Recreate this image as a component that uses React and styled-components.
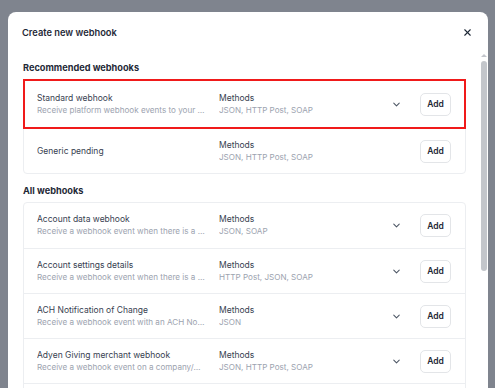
import React from "react";
import styled, { createGlobalStyle } from "styled-components";
import { ChevronDown, X } from "lucide-react";

const GlobalStyle = createGlobalStyle`
  * { box-sizing: border-box; }
  html, body { margin: 0; padding: 0; }
  body {
    font-family: Inter, "Noto Sans", sans-serif;
    background: #7f848e;
    overflow: hidden;
  }
`;

const Backdrop = styled.div`
  width: 495px;
  height: 388px;
  padding: 12px 7px 0 8px;
  overflow: hidden;
`;

const Modal = styled.div`
  width: 480px;
  height: 430px;
  background: #fff;
  border-radius: 8px;
  display: flex;
  flex-direction: column;
`;

const Header = styled.div`
  height: 40px;
  flex-shrink: 0;
  display: flex;
  align-items: center;
  justify-content: space-between;
  padding: 0 15px 0 14px;
`;

const Title = styled.h2`
  margin: 0;
  font-size: 9.3px;
  font-weight: 600;
  color: #1f2937;
`;

const CloseButton = styled.button`
  border: 0;
  background: none;
  padding: 0;
  display: flex;
  color: #1f2937;
  cursor: pointer;
`;

const Main = styled.div`
  flex: 1;
  min-height: 0;
  display: flex;
`;

const Content = styled.div`
  flex: 1;
  min-width: 0;
  overflow: hidden;
  padding: 10px 15px 16px 15px;
`;

const ScrollRail = styled.div`
  width: 6px;
  margin-right: 1px;
  padding-top: 2px;
  display: flex;
  flex-direction: column;
  align-items: center;
`;

const ScrollArrow = styled.span`
  width: 0;
  height: 0;
  margin-bottom: 4px;
  border-left: 3px solid transparent;
  border-right: 3px solid transparent;
  border-bottom: 3px solid #c3c6cb;
`;

const ScrollThumb = styled.div`
  width: 6px;
  height: 210px;
  border-radius: 3px;
  background: #c3c6cb;
`;

const SectionTitle = styled.h3`
  margin: 0 0 5px;
  font-size: 9.2px;
  font-weight: 700;
  color: #1f2937;
  line-height: 12px;
`;

const Card = styled.div`
  border: 1px solid #eceef1;
  border-radius: 4px;
  margin-bottom: 11px;
`;

const Row = styled.div`
  display: grid;
  grid-template-columns: 168px 1fr 20px 31px;
  column-gap: 14px;
  align-items: center;
  height: ${(p) => (p.$highlight ? "48px" : "45px")};
  padding: 0 14px 0 13px;
  border-top: 1px solid #eceef1;
  outline: ${(p) => (p.$highlight ? "2px solid #f01a1a" : "none")};
  outline-offset: -1px;

  &:first-child { border-top: 0; }
`;

const Cell = styled.div`
  min-width: 0;
  display: flex;
  flex-direction: column;
  gap: 1px;
`;

const Name = styled.div`
  font-size: 8.5px;
  line-height: 11px;
  color: #374151;
  white-space: nowrap;
  overflow: hidden;
  text-overflow: ellipsis;
`;

const Desc = styled(Name)`
  font-size: 8.1px;
  color: #9ca3af;
`;

const Toggle = styled.span`
  display: flex;
  justify-content: center;
  color: #4b5563;
`;

const AddButton = styled.button`
  width: 31px;
  height: 23px;
  border: 1px solid #e3e5e8;
  border-radius: 5px;
  background: #fff;
  font-family: inherit;
  font-size: 8.5px;
  font-weight: 600;
  color: #1f2937;
  padding: 0;
  cursor: pointer;
`;

const recommended = [
  {
    name: "Standard webhook",
    desc: "Receive platform webhook events to your server",
    methods: "JSON, HTTP Post, SOAP",
    highlight: true,
  },
  { name: "Generic pending", methods: "JSON, HTTP Post, SOAP" },
];

const all = [
  { name: "Account data webhook", desc: "Receive a webhook event when there is a change", methods: "JSON, SOAP" },
  { name: "Account settings details", desc: "Receive a webhook event when there is a change", methods: "HTTP Post, JSON, SOAP" },
  { name: "ACH Notification of Change", desc: "Receive a webhook event with an ACH Notification", methods: "JSON" },
  { name: "Adyen Giving merchant webhook", desc: "Receive a webhook event on a company/merchant", methods: "JSON, HTTP Post, SOAP" },
  { name: "Balance platform webhook", desc: "Receive a webhook event for balance changes", methods: "JSON" },
];

const WebhookRow = ({ item }) => (
  <Row $highlight={item.highlight}>
    <Cell>
      <Name>{item.name}</Name>
      {item.desc && <Desc>{item.desc}</Desc>}
    </Cell>
    <Cell>
      <Name>Methods</Name>
      <Desc>{item.methods}</Desc>
    </Cell>
    <Toggle>{item.desc ? <ChevronDown size={11} strokeWidth={2.2} /> : null}</Toggle>
    <AddButton>Add</AddButton>
  </Row>
);

export default function App() {
  return (
    <>
      <GlobalStyle />
      <Backdrop>
        <Modal>
          <Header>
            <Title>Create new webhook</Title>
            <CloseButton aria-label="Close">
              <X size={11} strokeWidth={2.4} />
            </CloseButton>
          </Header>
          <Main>
            <Content>
              <SectionTitle>Recommended webhooks</SectionTitle>
              <Card>
                {recommended.map((item) => (
                  <WebhookRow key={item.name} item={item} />
                ))}
              </Card>
              <SectionTitle>All webhooks</SectionTitle>
              <Card>
                {all.map((item) => (
                  <WebhookRow key={item.name} item={item} />
                ))}
              </Card>
            </Content>
            <ScrollRail>
              <ScrollArrow />
              <ScrollThumb />
            </ScrollRail>
          </Main>
        </Modal>
      </Backdrop>
    </>
  );
}
